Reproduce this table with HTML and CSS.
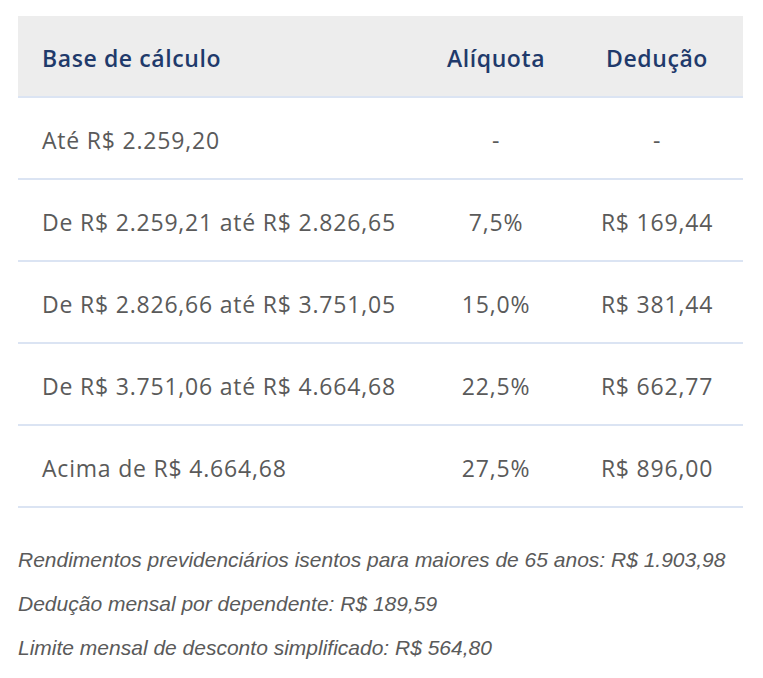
FILE: index.html
```html
<!DOCTYPE html>
<html lang="pt-BR">
<head>
<meta charset="utf-8">
<title>Tabela IRPF</title>
<link rel="stylesheet" href="styles.css">
</head>
<body>
<div class="wrap">
  <table class="irpf">
    <thead>
      <tr>
        <th class="c1">Base de cálculo</th>
        <th class="c2">Alíquota</th>
        <th class="c3">Dedução</th>
      </tr>
    </thead>
    <tbody>
      <tr><td class="c1">Até R$ 2.259,20</td><td class="c2">-</td><td class="c3">-</td></tr>
      <tr><td class="c1">De R$ 2.259,21 até R$ 2.826,65</td><td class="c2">7,5%</td><td class="c3">R$ 169,44</td></tr>
      <tr><td class="c1">De R$ 2.826,66 até R$ 3.751,05</td><td class="c2">15,0%</td><td class="c3">R$ 381,44</td></tr>
      <tr><td class="c1">De R$ 3.751,06 até R$ 4.664,68</td><td class="c2">22,5%</td><td class="c3">R$ 662,77</td></tr>
      <tr><td class="c1">Acima de R$ 4.664,68</td><td class="c2">27,5%</td><td class="c3">R$ 896,00</td></tr>
    </tbody>
  </table>
  <div class="notes">
    <p>Rendimentos previdenciários isentos para maiores de 65 anos: R$ 1.903,98</p>
    <p>Dedução mensal por dependente: R$ 189,59</p>
    <p>Limite mensal de desconto simplificado: R$ 564,80</p>
  </div>
</div>
</body>
</html>
```

FILE: styles.css
```css
html, body {
  margin: 0;
  padding: 0;
  background: #ffffff;
}
.wrap {
  padding: 16px 20px 0 18px;
}
.irpf {
  width: 725px;
  border-collapse: collapse;
  table-layout: fixed;
  font-family: "Open Sans", Lato, sans-serif;
}
.irpf th, .irpf td {
  padding: 0;
  border-bottom: 2px solid #dbe4f3;
}
.irpf th {
  height: 76px;
  padding-top: 4px;
  background: #ededed;
  color: #1f3a6b;
  font-size: 23px;
  font-weight: 600;
  letter-spacing: 0.6px;
}
.irpf td {
  height: 76px;
  padding-top: 4px;
  color: #5a5a5a;
  font-size: 23px;
  font-weight: 400;
  letter-spacing: 0.8px;
}
.c1 { width: 403px; text-align: left; padding-left: 24px !important; box-sizing: border-box; }
.c2 { width: 150px; text-align: center; }
.c3 { width: 172px; text-align: center; }
.notes {
  padding-top: 40px;
  font-family: "Liberation Sans", Arial, sans-serif;
  font-style: italic;
  font-size: 21px;
  color: #5a5a5a;
}
.notes p {
  margin: 0;
  line-height: 24px;
  padding-bottom: 20px;
}
```
